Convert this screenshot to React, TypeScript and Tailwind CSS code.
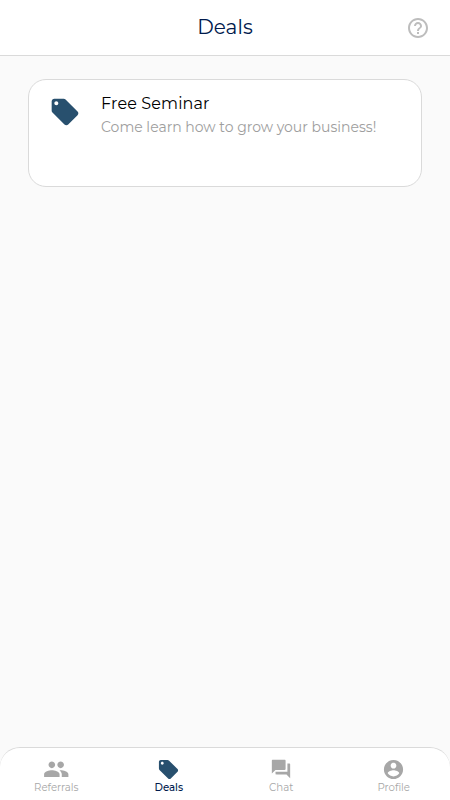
import type { ReactNode } from "react";
import { MdPeople, MdLocalOffer, MdQuestionAnswer, MdHelpOutline } from "react-icons/md";

function AccountIcon() {
  return (
    <svg width="23" height="23" viewBox="0 0 24 24" fill="currentColor">
      <path d="M12 2C6.48 2 2 6.48 2 12s4.48 10 10 10 10-4.48 10-10S17.52 2 12 2zm0 3c1.66 0 3 1.34 3 3s-1.34 3-3 3-3-1.34-3-3 1.34-3 3-3zm0 14.2c-2.5 0-4.71-1.28-6-3.22.03-1.99 4-3.08 6-3.08 1.99 0 5.97 1.09 6 3.08-1.29 1.94-3.5 3.22-6 3.22z" />
    </svg>
  );
}

function NavItem({ icon, label, active = false }: { icon: ReactNode; label: ReactNode; active?: boolean }) {
  return (
    <button className={`flex flex-1 flex-col items-center ${active ? "text-[#001a4d] font-medium" : "text-[#a7a7a7]"}`}>
      <span className="flex h-6 items-center justify-center">{icon}</span>
      <span className="whitespace-nowrap text-[10.2px] leading-[13px]">{label}</span>
    </button>
  );
}

export default function App() {
  return (
    <div className="flex h-[800px] w-[450px] flex-col overflow-hidden bg-[#fafafa] font-[Montserrat,Inter,sans-serif]">
      <header className="grid h-14 shrink-0 grid-cols-[1fr_auto_1fr] items-center border-b border-[#dadada] bg-white">
        <span />
        <h1 className="pb-0.5 text-[20px] leading-6 tracking-[0.1px] text-[#001a4d]">Deals</h1>
        <MdHelpOutline className="mr-5 justify-self-end text-[#bdbdbd]" size={24} />
      </header>
      <main className="flex-1 px-7 pt-[23px]">
        <article className="flex h-[108px] rounded-[18px] border border-[#dadada] bg-white pl-5 pt-4">
          <MdLocalOffer className="shrink-0 text-[#28506e]" size={32} />
          <div className="-mt-0.5 ml-5">
            <h2 className="text-[16px] leading-5 tracking-[0.12px] text-black">Free Seminar</h2>
            <p className="mt-[3px] whitespace-nowrap text-[14px] leading-5 text-[#9e9e9e]">Come learn how to grow your business!</p>
          </div>
        </article>
      </main>
      <nav className="flex h-[53px] shrink-0 rounded-t-[20px] border-t border-[#dadada] bg-white pt-[9px]">
        <NavItem icon={<MdPeople size={26.5} />} label="Referrals" />
        <NavItem icon={<MdLocalOffer size={23} className="text-[#28506e]" />} label="Deals" active />
        <NavItem icon={<MdQuestionAnswer size={22} />} label="Chat" />
        <NavItem icon={<AccountIcon />} label="Profile" />
      </nav>
    </div>
  );
}
